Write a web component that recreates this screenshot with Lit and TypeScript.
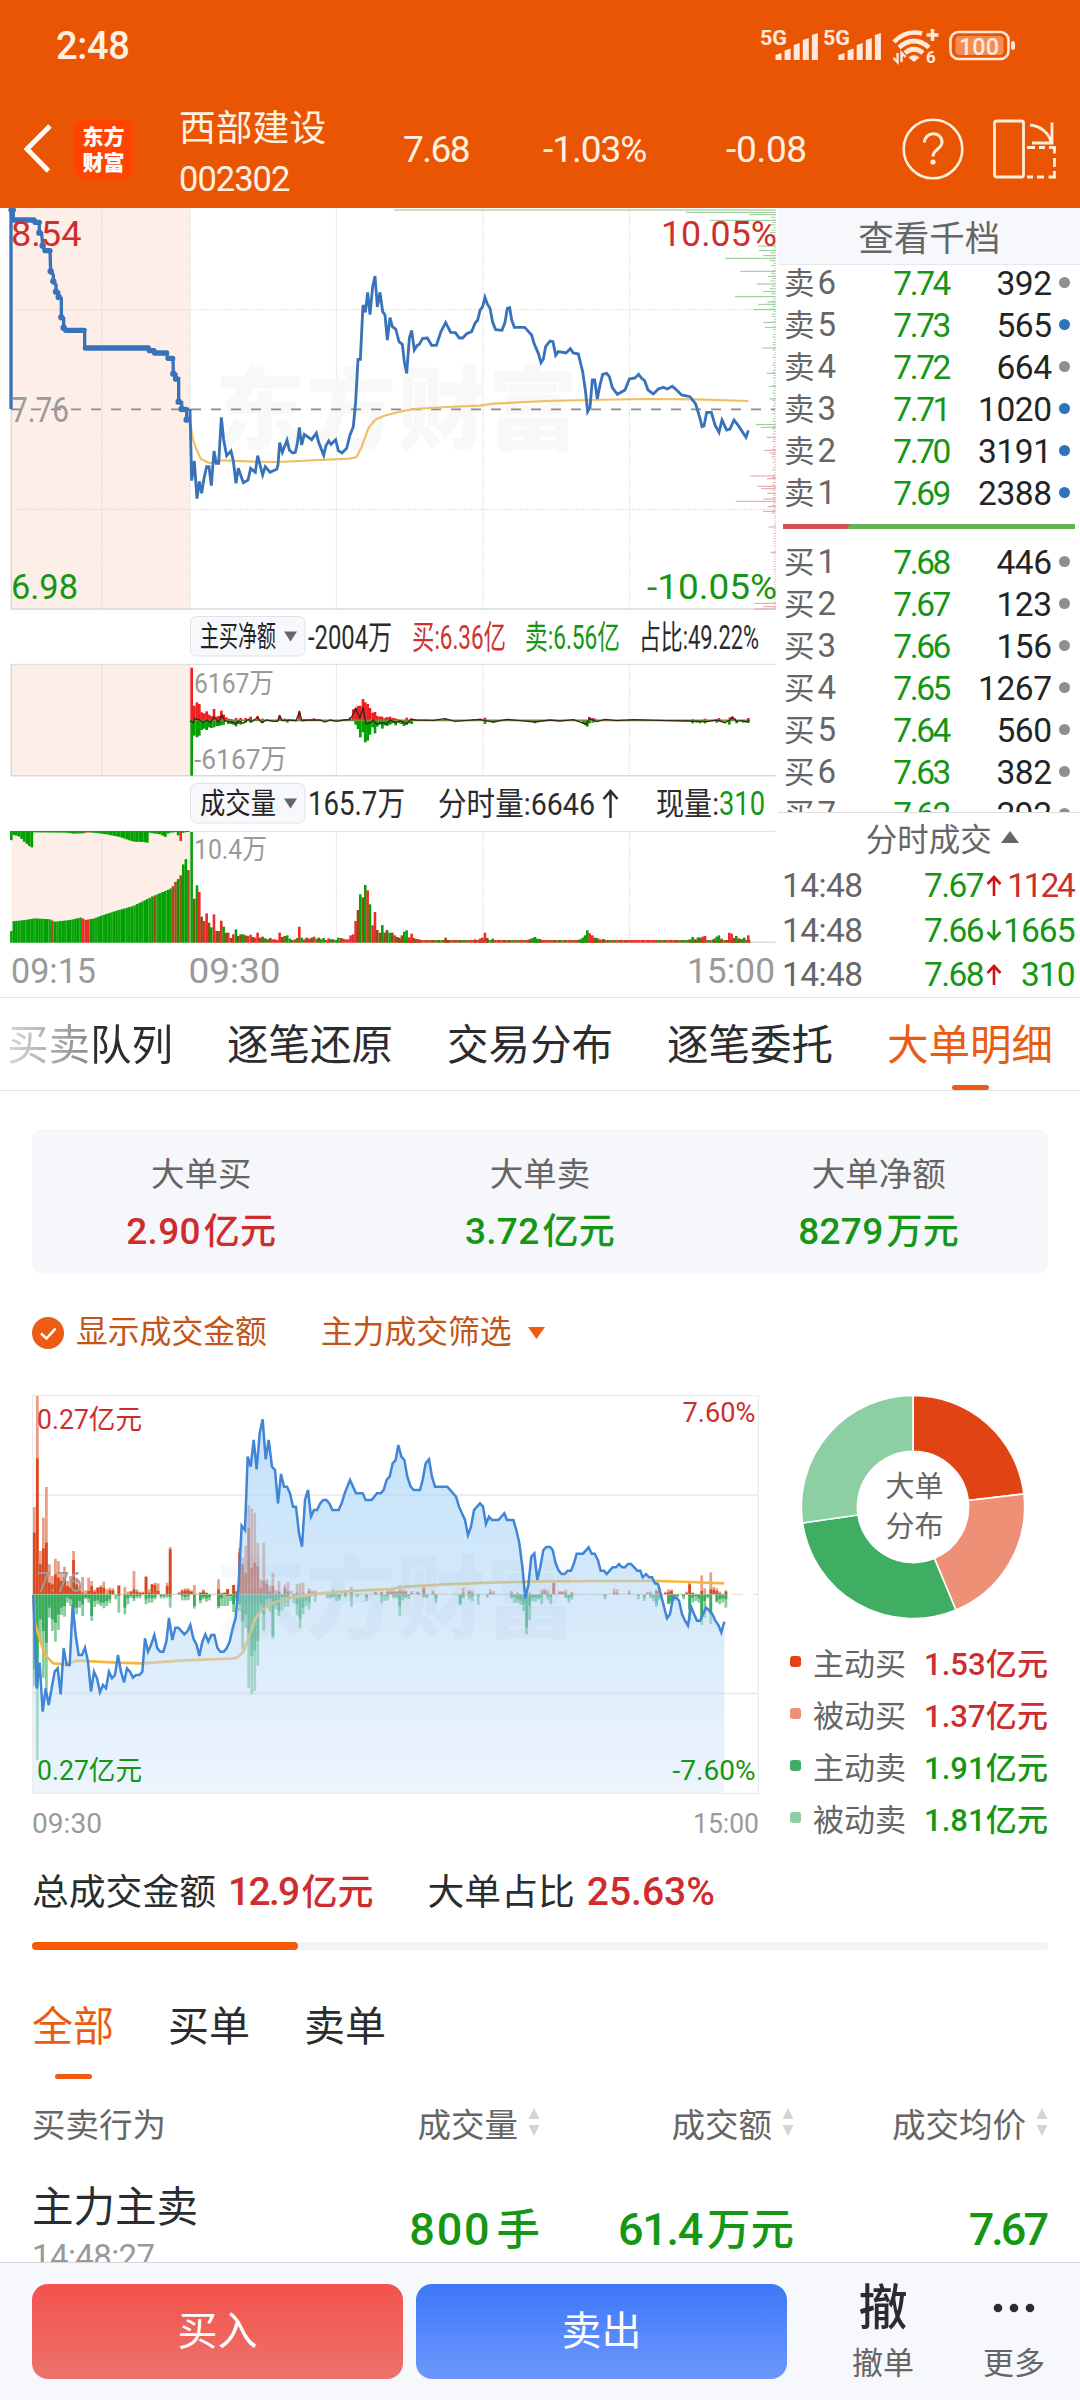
import { LitElement, html, svg, css } from "lit";
import { customElement } from "lit/decorators.js";

type P = [number, number];
const pairs = (s: string): P[] =>
  s.trim().split(/\s+/).map((p) => p.split(",").map(Number) as P);
const shift = (s: string, dx: number) =>
  pairs(s).map(([x, y]) => `${x + dx},${y}`).join(" ");

const RED = "#cd3232";
const GREEN = "#159615";
const INK = "#2b2c2e";
const MUTE = "#9a9a9a";

/** Text stretched to an exact advance width. */
const label = (x: number, y: number, w: number, size: number, fill: string, text: string) =>
  svg`<text x=${x} y=${y} font-size=${size} fill=${fill} textLength=${w} lengthAdjust="spacingAndGlyphs">${text}</text>`;

/* Chart data is stored in thirds of a pixel. */
const AUCTION = "33,612 33,15 40,15 40,45 100,45 105,52 118,52 118,83 125,85 128,122 135,137 150,137 152,199 160,210 160,229 168,240 168,260 176,262 176,276 184,280 184,337 191,340 191,368 197,375 254,375 254,429 445,429 450,437 460,437 465,444 500,444 503,460 519,460 520,506 528,508 528,521 536,521 536,590 545,592 545,612 560,614 560,644";
const AUCTION_DOTS: P[] = pairs("118,83 128,122 152,199 160,229 168,260 176,276 184,337 191,368 520,506 528,521 536,590 545,612 560,644");
const PRICE = "570,612 575,827 583,768 591,881 598,829 605,865 612,820 620,785 627,785 634,842 642,738 649,775 656,775 664,637 671,705 680,752 693,738 700,768 708,835 715,790 730,833 744,825 752,790 766,802 773,752 788,810 796,785 810,802 830,793 834,780 839,713 847,742 861,706 868,735 878,744 886,742 892,715 898,667 905,720 913,688 935,704 949,684 956,712 971,751 978,722 986,708 993,718 1007,704 1015,737 1026,744 1040,730 1050,690 1060,665 1067,590 1074,463 1081,463 1089,300 1096,322 1103,262 1110,329 1118,245 1125,213 1132,306 1140,262 1148,320 1155,330 1162,405 1170,338 1177,365 1187,372 " +
  shift("57,410 67,418 73,470 80,505 88,400 95,376 103,435 111,422 118,418 128,400 142,399 155,421 169,421 183,380 197,353 212,382 226,383 238,399 248,399 260,386 275,380 285,355 293,345 300,316 308,305 315,277 322,297 330,310 338,352 347,374 366,376 375,352 382,310 389,308 395,345 403,367 434,367 455,390 462,415 475,445 483,473 490,462 497,425 510,408 519,410 527,451 535,440 558,444 571,431 580,444 595,447 608,500 616,555 623,620 630,607 637,525 644,525 652,582 660,540 668,508 680,505 688,515 697,548 712,568 735,555 748,522 765,519 776,508 785,520 794,527 804,555 820,567 835,552 850,547 862,552 877,544 893,558 905,570 930,575 947,597 960,640 966,665 972,663 980,622 994,622 1005,660 1017,682 1026,645 1040,675 1050,672 1062,645 1075,662 1098,697 1105,676", 1140);
const AVERAGE = "572,660 578,700 590,735 603,762 625,773 640,775 665,766 760,770 830,771 1000,763 1050,761 1070,756 1085,725 1105,670 1125,645 1150,633 1200,620 1240,612 1340,606 1440,602 1480,596 1640,588 1760,585 1940,582 2090,583 2245,588";

const DEPTH_SELL = pairs("22,918 29,1107 46,990 123,1135 137,1137 152,1150 160,1035 199,1081 214,1163 237,1130 260,1148 275,1065 291,1162 298,1135 314,1120 352,1150 367,1155 429,1147 505,1160 544,1168 582,1168 659,1127 667,1143");
const DEPTH_BUY = pairs("697,1160 736,1152 744,1168 813,1110 821,1160 844,1133 851,1143 865,1162 882,1150 889,1067 905,1163 919,1149 966,1165 1042,1172 1195,1122 1205,1150 1212,1125");

/* x,height pairs around the zero line */
const NET_UP = "575,159 583,45 591,55 598,50 605,25 613,22 620,28 627,18 634,14 642,35 650,12 656,14 664,30 671,18 678,10 685,6 693,5 708,8 722,8 737,8 752,12 773,14 788,6 839,16 854,6 898,28 913,5 942,7 1050,10 1060,34 1067,38 1074,44 1081,45 1089,65 1096,55 1103,50 1110,38 1118,24 1125,26 1132,14 1140,12 1147,10 1155,7 1162,10 1170,8 1177,6 1185,7 1192,5 1145,12 1160,10 1170,12 1180,8 1220,9 1235,7 1335,8 1420,5 1440,6 1455,9 1768,11 1778,8 1785,6 2078,4 2115,6 2157,8 2190,10 2197,13 2204,7 2245,8";
const NET_DOWN = "575,165 583,45 591,50 598,45 605,28 613,24 620,28 627,20 634,22 642,20 650,16 656,16 664,14 671,12 685,10 693,10 700,12 708,17 715,10 722,12 737,6 752,6 788,7 862,6 1067,12 1074,25 1081,50 1089,35 1096,65 1103,60 1110,42 1118,20 1125,38 1132,18 1140,12 1147,14 1155,10 1162,16 1170,12 1177,8 1187,14 1197,8 1147,24 1155,14 1162,8 1170,10 1180,7 1205,10 1212,16 1220,12 1228,8 1235,10 1455,10 1480,6 1605,8 1750,10 1757,14 1762,18 1770,8 1780,6 2078,8 2090,6 2100,8 2115,8 2150,6 2188,12 2210,8 2230,6 2245,7";
const NET_LINE = "570,332 580,338 583,326 600,330 610,338 620,330 632,338 642,320 655,337 666,316 674,333 700,337 708,342 715,333 730,340 745,328 755,335 773,322 785,338 800,330 820,334 832,334 839,318 847,332 870,330 888,332 898,306 906,332 925,330 960,330 975,336 990,330 1010,334 1030,330 1050,328 1060,312 1067,296 1080,324 1089,292 1098,342 1112,338 1120,330 1130,343 1145,338 1160,342 1170,330 1187,338 1200,332 1220,342 1232,328 1250,330 1300,331 1335,326 1365,334 1440,328 1455,332 1480,336 1520,328 1560,332 1605,336 1650,330 1680,333 1720,329 1760,343 1768,326 1790,335 1815,328 1850,332 1900,329 2000,332 2060,333 2120,335 2150,330 2175,338 2190,330 2197,322 2210,334 2225,332 2240,336 2248,330";

const VOL: string[] = [
  "g575,332 m583,132 g591,172 r598,152 m605,78 r613,65 r620,88 m627,60 g634,46 r642,85 m650,35 m656,35 r664,66 g671,48 m678,30 r685,30 m693,14 r700,25 g708,40 m715,20 m722,25 g730,25 m737,22 r744,20 r752,24 m759,17 r766,15 r773,30 m781,15 m788,18 g796,13 m803,10 m811,14 r818,10 r825,10 r832,8 r839,30 m847,17 m854,20 g862,22 g870,12 m877,8 r885,10 g892,14 r898,48 g905,15 r913,10 m920,15 r928,12 m935,15 r942,18 g950,12 m957,15 g964,10 g971,14 r979,8 r986,13 g993,10 m1000,10 g1008,8 g1015,15 m1023,14 r1030,12 r1037,10 r1045,10 r1052,22 r1060,25 r1067,65 m1074,98 g1081,145 m1089,136 g1096,173 r1103,157 g1110,115 r1118,52 r1125,92 m1132,38 m1140,30",
  "g1147,53 m1154,30 m1161,38 g1169,30 m1177,30 r1184,22 m1191,17 m1198,15 m1206,22 g1213,33 g1220,37 r1228,16 r1235,27 m1242,14 r1250,11 r1257,10 m1337,15 m1344,8 r1425,10 r1440,12 r1447,15 r1455,30 m1462,14 g1478,12 m1590,11 g1598,14 g1605,17 g1612,12 m1620,11 g1740,10 g1748,15 g1755,22 g1762,37 r1769,28 r1777,22 m1784,15 g1792,14 r1800,10 m1810,11 g2070,10 g2078,17 m2086,10 g2094,16 m2101,15 r2108,18 r2115,20 m2142,12 g2150,18 g2157,22 m2165,12 r2188,30 r2195,27 m2202,14 g2209,20 m2217,13 g2225,11 g2233,15 r2245,22",
];
const VOL_COLOR: Record<string, string> = { g: "#0aa00a", r: "#ee2a2a", m: "#8a5010" };

const AUCTION_TOP = pairs("33,973 37,934 75,930 105,925 150,928 165,935 210,930 245,922 255,930 280,926 310,915 350,902 400,888 440,868 460,858 510,837 520,828 530,810 538,805 545,790 552,752 562,744 570,832");
const AUCTION_HANG = pairs("33,30 40,12 50,14 60,18 70,30 80,38 88,45 97,50 99,4 200,5 220,8 250,7 262,4 290,6 320,10 340,14 360,18 380,25 400,32 430,33 443,35 448,5 480,10 497,18 505,6 530,3 543,32 550,5 560,3");
const lerp = (pts: P[], x: number) => {
  for (let i = 1; i < pts.length; i++)
    if (x <= pts[i][0]) {
      const [a, b] = [pts[i - 1], pts[i]];
      return a[1] + ((b[1] - a[1]) * (x - a[0])) / (b[0] - a[0] || 1);
    }
  return pts[pts.length - 1][1];
};

const FLOW_LINE = "100,645 110,925 119,848 128,995 137,925 146,975 155,925 164,875 173,865 182,943 191,805 200,855 209,855 218,675 227,765 236,825 246,825 255,803 264,845 273,935 282,875 291,895 300,937 309,915 318,925 327,875 336,895 345,885 354,825 363,875 372,907 381,865 390,875 399,893 408,885 418,885 427,875 435,775 444,815 453,795 463,765 472,805 481,815 490,815 499,785 507,714 517,780 526,743 535,743 553,763 563,753 571,735 580,775 590,795 598,828 607,785 616,763 625,785 634,765 643,765 652,803 661,815 671,815 680,805 689,785 698,745 707,713 716,610 725,437 735,450 743,230 752,260 761,180 770,268 779,160 788,118 797,238 806,180 816,260 825,270 834,370 843,282 852,320 861,320 870,340 879,380 888,380 897,460 906,500 915,360 924,330 933,410 942,390 951,390 961,370 970,360 979,360 988,370 997,390 1016,390 1025,370 1034,340 1050,300 1068,340 1088,340 1097,360 1115,360 1131,340 1142,340 1151,330 1160,300 1169,290 1178,250 1187,240 " +
  shift("25,195 34,230 43,240 52,290 62,320 71,330 90,330 98,300 107,250 117,238 126,290 135,320 172,320 198,350 207,380 225,420 234,465 243,440 252,390 270,370 279,380 288,432 297,410 306,420 325,420 343,400 351,420 370,420 379,450 388,490 397,560 406,655 415,615 424,530 433,520 442,600 451,560 460,510 469,501 480,501 488,510 497,550 506,572 515,582 524,582 533,572 543,572 552,550 560,521 579,521 596,502 605,521 614,521 624,541 632,572 642,572 650,582 668,562 678,562 687,552 696,562 705,562 714,552 723,552 742,572 751,572 758,592 768,582 777,592 786,592 795,610 804,612 813,645 822,680 831,715 840,702 849,653 858,653 867,662 876,702 885,722 894,737 903,680 912,702 921,722 930,722 939,702 948,683 958,692 967,702 976,722 985,735 994,757 1003,725", 1170);
const FLOW_AVG = "100,645 105,730 117,770 135,825 160,850 200,853 230,842 350,848 427,850 550,841 690,836 712,833 730,815 745,775 765,718 780,695 810,672 860,655 960,640 1068,632 1170,627 1220,620 1340,613 1470,608 1600,605 1790,603 1970,603 2070,606 2173,610";

/* minute,total,active */
const triples = (s: string) => s.trim().split(/\s+/).map((t) => t.split(",").map(Number));
const BUY_FLOW = triples("0,262,185 1,595,408 2,130,90 3,230,138 4,322,155 5,90,35 6,55,30 7,107,60 8,100,50 9,60,40 10,83,50 11,40,25 12,55,20 13,130,103 14,50,30 15,25,10 16,52,5 17,12,0 18,50,10 19,40,25 20,14,8 21,20,20 22,27,22 23,38,20 24,15,0 25,20,12 26,18,12 28,27,26 30,22,0 31,8,0 32,10,8 33,70,15 34,15,8 35,8,5 36,8,5 37,53,53 38,15,5 39,30,30 40,35,28 41,33,10 44,35,25 45,142,135 48,7,3 49,15,10 50,18,12 51,18,12 52,12,8 53,28,0 55,7,4 56,15,10 57,6,4 61,45,15 62,5,2 63,6,4 64,16,16 66,28,28 67,10,8 68,138,125 69,110,90 70,145,65 71,268,200 72,258,80 73,245,95 74,155,85 75,45,20 76,155,40 77,45,30 78,25,8 79,65,25 80,12,0 81,40,8 83,30,20 84,37,8 85,10,0 87,32,5 88,33,0 89,35,5 91,18,10 92,12,5 93,12,8 99,15,5 103,8,4 105,22,15 113,8,6 115,8,6 117,12,8 118,15,6 119,20,8 120,10,6 121,28,10 122,14,8 123,12,8 125,10,4 127,8,5 129,22,18 132,12,4 142,20,4 144,12,8 145,10,4 151,15,6 152,10,3 158,10,4 160,6,3 164,6,3 168,14,4 169,17,10 170,12,4 172,35,35 174,8,8 175,8,8 176,14,5 178,8,4 192,17,5 193,16,5 197,12,4 203,8,3 204,8,3 206,15,10 207,20,8 209,8,4 210,15,6 211,15,10 216,8,4 217,37,30 218,6,4 221,57,10 222,18,0 224,66,15 225,22,14 226,18,10 227,8,4 229,12,8");
const SELL_FLOW = triples("0,275,225 1,497,282 2,145,75 3,250,110 4,285,145 5,70,40 6,110,75 7,142,85 8,107,60 9,62,40 10,67,35 11,25,10 12,35,15 13,75,40 14,60,40 15,40,20 16,65,30 17,15,10 18,25,12 19,80,65 20,38,20 21,30,18 22,35,25 23,42,25 24,35,20 25,27,15 27,15,0 28,55,5 30,60,40 31,30,12 32,10,5 33,20,12 34,12,5 35,12,5 37,30,15 38,25,10 39,25,12 40,15,8 42,12,6 43,12,4 44,10,4 45,40,8 49,18,5 50,18,8 51,18,5 53,43,35 55,27,18 56,15,8 57,22,12 58,18,8 61,42,36 62,35,12 63,35,0 64,35,5 65,20,5 66,53,30 67,20,10 68,50,30 69,165,80 70,100,60 71,280,125 72,300,185 73,290,170 74,215,140 75,50,30 76,110,60 77,40,15 78,52,12 79,133,125 80,45,30 81,65,50 82,48,8 83,38,15 84,38,8 86,27,12 87,63,30 88,100,75 89,60,40 90,35,20 91,45,25 93,22,5 97,12,4 98,12,8 99,10,5 100,20,4 101,18,10 103,8,4 105,37,6 107,8,4 110,20,10 115,26,4 116,20,3 117,18,6 119,12,6 120,12,6 121,65,35 122,18,5 123,12,8 124,14,5 129,10,6 130,12,5 133,25,12 141,33,28 142,12,8 144,15,6 145,20,6 147,32,6 150,10,5 159,25,8 158,12,8 160,25,15 161,32,18 162,50,30 163,120,100 164,78,35 165,20,10 166,22,8 167,15,10 168,30,8 170,15,5 171,30,8 176,12,8 177,25,12 178,16,8 189,15,6 200,15,5 202,20,10 204,12,5 205,20,10 206,38,30 207,18,10 210,28,28 211,28,22 212,20,8 213,10,5 215,15,6 217,80,45 218,25,10 219,20,5 220,25,12 221,92,75 222,70,20 223,12,6 224,90,60 226,25,20 227,30,15 228,25,12 229,40,15");

const SELLS = [["6", "7.74", "392", 0], ["5", "7.73", "565", 1], ["4", "7.72", "664", 0], ["3", "7.71", "1020", 1], ["2", "7.70", "3191", 1], ["1", "7.69", "2388", 1]];
const BUYS = [["1", "7.68", "446", 0], ["2", "7.67", "123", 0], ["3", "7.66", "156", 0], ["4", "7.65", "1267", 0], ["5", "7.64", "560", 0], ["6", "7.63", "382", 0], ["7", "7.62", "292", 0]];

const FONT = css`
  :host {
    display: block;
    font-family: Roboto, "Noto Sans CJK SC", sans-serif;
    box-sizing: border-box;
  }
  svg { display: block; font-family: Roboto, "Noto Sans CJK SC", sans-serif; }
  .r { color: #cd2d2d; }
  .g { color: #159615; }
`;

@customElement("stock-header")
class StockHeader extends LitElement {
  static styles = [FONT, css`
    :host { height: 208px; background: #ea5504; color: #fff1e2; }
    .status { display: flex; justify-content: space-between; align-items: center; height: 92px; padding: 0 63px 0 56px; }
    .time { font-size: 38px; font-weight: 500; letter-spacing: -0.3px; }
    .bar { display: flex; align-items: center; height: 114px; padding: 0 22px 0 23px; }
    .logo { width: 59px; height: 59px; margin-left: 21px; border-radius: 12px; background: #ff4300; color: #fff; font-weight: 900; font-size: 21px; line-height: 26px; text-align: center; padding-top: 4px; box-sizing: border-box; }
    .name { width: 224px; margin-left: 46px; font-size: 36.8px; line-height: 51px; padding-top: 9px; }
    .code { font-size: 34.5px; letter-spacing: -1px; }
    .num { font-size: 37px; letter-spacing: -1.5px; width: 140px; }
    .pct { width: 183px; letter-spacing: -1px; }
    .diff { width: 176px; letter-spacing: -0.3px; }
    .help { margin-right: 28px; }
  `];
  render() {
    const bars = (x: number) => [0, 1, 2, 3, 4].map((i) => {
      const t = [53, 48.5, 43, 38, 33][i];
      return svg`<path d="M${x + i * 9.1} ${t + 2} l6 -2 V60 h-6 Z" fill="#ffe9dc"/>`;
    });
    return html`
      <div class="status">
        <span class="time">2:48</span>
        <svg width="258" height="44" viewBox="760 24 258 44">
          <text x="761" y="44.5" font-size="20" font-weight="700" fill="#ffe9dc" textLength="27" lengthAdjust="spacingAndGlyphs">5G</text>
          ${bars(776.5)}
          <text x="824" y="44.5" font-size="20" font-weight="700" fill="#ffe9dc" textLength="27" lengthAdjust="spacingAndGlyphs">5G</text>
          ${bars(839.5)}
          <g fill="none" stroke="#ffe9dc" stroke-width="4.6">
            <path d="M895 42 Q907 29.5 923 33.500"/>
            <path d="M900 47.5 Q915 34.5 930 47.5"/>
            <path d="M906 53 Q915 45.500 924 53"/>
          </g>
          <path d="M909.500 57.500 Q915 53 920.500 57.500 L915 62 Z" fill="#ffe9dc"/>
          <path d="M933.500 29 v12 M927.500 35 h12" stroke="#ffe9dc" stroke-width="3.600"/>
          <path d="M898.500 53 v9 l-4 -4 M902.500 62 v-9 l4 4" fill="none" stroke="#ffe9dc" stroke-width="2.400"/>
          <text x="927" y="62.500" font-size="17" font-weight="700" fill="#ffe9dc">6</text>
          <rect x="951.500" y="32" width="58" height="27" rx="8" fill="none" stroke="#ffe9dc" stroke-width="2.600"/>
          <rect x="956.500" y="36" width="48" height="19" rx="4" fill="#f48c53"/>
          <text x="960" y="54.500" font-size="24" font-weight="500" fill="#ffe9dc" textLength="40" lengthAdjust="spacingAndGlyphs">100</text>
          <rect x="1012" y="41" width="4" height="9" rx="2" fill="#ffe9dc"/>
        </svg>
      </div>
      <div class="bar">
        <svg width="30" height="52" viewBox="0 0 30 52"><path d="M27 3 L4 26 L25.500 48" fill="none" stroke="#fffaf5" stroke-width="5"/></svg>
        <div class="logo">东方<br />财富</div>
        <div class="name">西部建设<div class="code">002302</div></div>
        <div class="num">7.68</div>
        <div class="num pct">-1.03%</div>
        <div class="num diff">-0.08</div>
        <svg class="help" width="62" height="62" viewBox="0 0 62 62">
          <circle cx="31" cy="31" r="29.300" fill="none" stroke="#ffeeda" stroke-width="2.600"/>
          <path d="M22.500 24.500 C22.500 13 40 13 40 24 C40 31.500 31 31 31 38.500" fill="none" stroke="#ffeeda" stroke-width="3"/>
          <circle cx="31" cy="44" r="2.600" fill="#ffeeda"/>
        </svg>
        <svg width="66" height="62" viewBox="0 0 66 62" fill="none" stroke="#ffeeda" stroke-width="2.800">
          <rect x="2.500" y="3" width="29" height="56" rx="2"/>
          <path d="M38 7 C49 8 58 16 59 25 M60 4.500 V25 H40"/>
          <path d="M35 29.500 h8 M47 29.500 h6 M57 29.500 h5.500 v6 M62.500 40 v9 M62.500 53 v6 h-6 M52 59 h-7 M41 59 h-6"/>
        </svg>
      </div>`;
  }
}

@customElement("quote-chart")
class QuoteChart extends LitElement {
  static styles = [FONT, css`:host { width: 778px; flex: none; }`];
  render() {
    const grid = [306, 570, 1009, 1449, 1888];
    const depthFill = [];
    for (let y = 20, k = 0; y < 1212; y += 7.65, k++) {
      const sell = y < 680;
      const density = sell ? (y < 330 ? 16 : 8) : y < 930 ? 10 : 4;
      const len = 3 + ((k * 37) % 11) / 11 * density;
      depthFill.push(svg`<rect x=${2327 - len} y=${y} width=${len} height="3" fill=${sell ? "#93cf93" : "#eda6a6"}/>`);
    }
    const depth = (d: P[], c: string) => d.map(([y, x]) => svg`<rect x=${x + 1140} y=${y - 1.5} width=${1187 - x} height="3" fill=${c}/>`);
    const auctionBars = [];
    for (let x = 34, k = 0; x < 570; x += 7.7, k++) {
      const y = lerp(AUCTION_TOP, x);
      const red = Math.abs(x - 158) < 4 || (x > 248 && x < 272) || Math.abs(x - 463) < 4 || (x > 512 && x < 532) || Math.abs(x - 543) < 4 || x > 564;
      auctionBars.push(svg`<rect x=${x - 4} y=${y} width=${red ? 7.7 : 7.9} height=${998 - y} fill=${red ? (x > 240 && x < 280 ? "#ee2a2a" : "#a84a1c") : k % 3 ? "#00a000" : "#0ea60e"}/>`);
      const h = lerp(AUCTION_HANG, x);
      const hr = Math.abs(x - 543) < 5 || (x > 250 && x < 272);
      auctionBars.push(svg`<rect x=${x - 4} y="663" width="7.9" height=${h} fill=${hr ? "#e83030" : "#00a000"}/>`);
    }
    const baseline = [];
    for (let x = 1197, k = 0; x < 2248; x += 7.32, k++)
      baseline.push(svg`<rect x=${x} y="990" width="7.4" height="8" fill=${x > 1880 && x < 1960 ? "#ee2a2a" : ["#ee2a2a", "#8a5010", "#d03a1c", "#1f9a10", "#a84a1c"][(k * 7 + (k >> 2)) % 5]}/>`);
    return html`<svg width="778" height="789" viewBox="0 208 778 789">
      <g transform="translate(0 205) scale(.333333)">
        <rect x="34" y="9" width="536" height="1203" fill="#fdeee8"/>
        ${grid.map((x) => svg`<path d="M${x} 12 V1212" stroke="#d2cecc" stroke-width="3" stroke-dasharray="3 4"/>`)}
        ${[314, 913].map((y) => svg`<path d="M34 ${y} H2327" stroke="#d2cecc" stroke-width="3" stroke-dasharray="3 4"/>`)}
        <path d="M34 12 V1212 H2327" fill="none" stroke="#d9d9da" stroke-width="4.500"/>
      </g>
      <text x="215" y="442" font-size="90" font-weight="900" fill="#f7f7f7" fill-opacity=".85" textLength="363" lengthAdjust="spacing">东方财富</text>
      <g transform="translate(0 205) scale(.333333)">
        <path d="M33 613 H2325" stroke="#8b8b8b" stroke-width="5" stroke-dasharray="30 30"/>
        <rect x="1183" y="12" width="1144" height="6" fill="#cddcc0"/>
        ${depthFill}${depth(DEPTH_SELL, "#93c893")}${depth(DEPTH_BUY, "#dfa0a0")}
        <polyline points=${AVERAGE} fill="none" stroke="#efc063" stroke-width="6.500" stroke-linejoin="round"/>
        <polyline points=${AUCTION} fill="none" stroke="#3873ba" stroke-width="10"/>
        <path d="M33 15 H40 M40 45 H102 M105 52 H118 M135 137 H150 M197 376 H252 M256 429 H445 M448 437 H462 M464 444 H500 M504 460 H518 M545 613 H558" stroke="#3873ba" stroke-width="16" stroke-linecap="round"/>
        ${AUCTION_DOTS.map(([x, y]) => svg`<circle cx=${x} cy=${y} r="9.500" fill="#3873ba"/>`)}
        <path d="M564 612 L568 612" stroke="#3873ba" stroke-width="8"/>
        <polyline points=${PRICE} fill="none" stroke="#3873ba" stroke-width="8.500"/>
      </g>
      ${label(11, 246, 70.5, 34.5, "#cf2f2c", "8.54")}
      ${label(661, 246, 116, 34.5, "#cf2f2c", "10.05%")}
      ${label(11, 422, 58, 34.5, MUTE, "7.76")}
      ${label(11, 599, 67, 34.5, GREEN, "6.98")}
      ${label(647, 599, 130, 34.5, GREEN, "-10.05%")}

      <rect x="190.500" y="616.500" width="114.500" height="39.500" rx="6" fill="#f6f8fb" stroke="#dfe3e9"/>
      ${label(200, 647, 76, 29, "#222", "主买净额")}
      <path d="M284 631.500 h13 l-6.500 10 Z" fill="#666"/>
      ${label(308, 649, 84, 33, INK, "-2004万")}
      ${label(412, 649, 94, 33, RED, "买:6.36亿")}
      ${label(525, 649, 95, 33, GREEN, "卖:6.56亿")}
      ${label(639, 649, 120, 33, INK, "占比:49.22%")}

      <g transform="translate(0 610) scale(.333333)">
        <rect x="34" y="163" width="536" height="334" fill="#fdeee8"/>
        ${grid.map((x) => svg`<path d="M${x} 165 V497" stroke="#cfcbc9" stroke-width="3" stroke-dasharray="3 4"/>`)}
        <path d="M34 163 H2327" stroke="#dcdcdc" stroke-width="3"/>
        <path d="M34 163 V497 H2327" fill="none" stroke="#d9d9da" stroke-width="4.500"/>
        ${pairs(NET_UP).map(([x, h]) => svg`<rect x=${x - 4} y=${332 - h} width="8" height=${h} fill="#ee2020"/>`)}
        ${pairs(NET_DOWN).map(([x, h]) => svg`<rect x=${x - 4} y="332" width="8" height=${h} fill="#00a000"/>`)}
        <path d="M570 331 H2248" stroke="#7a8a3a" stroke-width="5"/>
        <polyline points=${NET_LINE} fill="none" stroke="#38261c" stroke-width="4"/>
      </g>
      ${label(194, 692.5, 80, 28.5, MUTE, "6167万")}
      ${label(194, 768.5, 93, 28.5, MUTE, "-6167万")}

      <rect x="190.500" y="783.500" width="114.500" height="39.500" rx="6" fill="#f6f8fb" stroke="#dfe3e9"/>
      ${label(200, 814, 76, 29, "#222", "成交量")}
      <path d="M284 798.500 h13 l-6.500 10 Z" fill="#666"/>
      ${label(308, 815, 97, 33, INK, "165.7万")}
      ${label(438, 815, 157, 32, INK, "分时量:6646")}
      <path d="M610.500 818 V791 M603.500 799 L610.500 791 L617.500 799" fill="none" stroke=${INK} stroke-width="2.500"/>
      ${label(656, 815, 63, 32, INK, "现量:")}
      ${label(719, 815, 46, 33, GREEN, "310")}

      <g transform="translate(0 610) scale(.333333)">
        <rect x="34" y="664" width="536" height="334" fill="#fdeee8"/>
        ${grid.map((x) => svg`<path d="M${x} 666 V998" stroke="#cfcbc9" stroke-width="3" stroke-dasharray="3 4"/>`)}
        <path d="M34 664 H2327" stroke="#dcdcdc" stroke-width="3"/>
        <path d="M34 997 H2327" stroke="#dcdcdc" stroke-width="4.500"/>
        ${auctionBars}${baseline}
        ${VOL.flatMap((s) => s.split(" ")).map((b) => {
          const [x, h] = b.slice(1).split(",").map(Number);
          return svg`<rect x=${x - 4} y=${998 - h} width="7.8" height=${h} fill=${VOL_COLOR[b[0]]}/>`;
        })}
      </g>
      ${label(194, 859, 73, 28.5, MUTE, "10.4万")}
      ${label(11, 983, 85, 35, MUTE, "09:15")}
      ${label(188.5, 983, 92, 35, MUTE, "09:30")}
      ${label(687, 983, 88, 35, MUTE, "15:00")}
    </svg>`;
  }
}

@customElement("order-book")
class OrderBook extends LitElement {
  static styles = [FONT, css`
    :host { flex: 1; display: flex; flex-direction: column; height: 789px; }
    .head { height: 57px; line-height: 62px; background: #f6f8fb; border-bottom: 1px solid #e6e8ec; text-align: center; font-size: 35.5px; color: #666; box-sizing: border-box; }
    .book { height: 548px; overflow: hidden; box-sizing: border-box; padding: 0 11px 0 6px; border-bottom: 1px solid #dedfe1; }
    .row { display: grid; grid-template-columns: 70px 97px 1fr 18px; align-items: center; height: 42px; line-height: 42px; }
    .sells { margin-top: -3px; }
    .side { font-size: 30.5px; color: #666; }
    .side b { font-weight: 400; font-size: 33px; margin-left: 3px; }
    .p { font-size: 33.5px; text-align: right; letter-spacing: -2.4px; padding-right: 2px; color: #159615; }
    .v { font-size: 33.5px; text-align: right; letter-spacing: -0.4px; color: #232426; }
    .dot { justify-self: end; width: 11px; height: 11px; border-radius: 50%; background: #8e8e93; margin-bottom: 3px; }
    .dot.big { background: #2f72bd; }
    .ratio { display: block; margin: 10px -6px 12px -1px; }
    .deal-head { height: 48px; display: flex; align-items: center; justify-content: center; gap: 9px; font-size: 31.5px; color: #666; padding-left: 26px; }
    .deals { padding: 3px 6px 0 4px; }
    .deal { display: grid; grid-template-columns: 110px 91px 20px 1fr; align-items: center; height: 44.5px; font-size: 33.5px; letter-spacing: -1.6px; }
    .deal span { text-align: right; }
    .deal .t { color: #666; text-align: left; letter-spacing: -0.6px; }
    .deal .q { letter-spacing: -0.9px; }
    .deal .q.r { letter-spacing: -2.2px; padding-right: 1px; }
  `];
  row(side: string, r: any[]) {
    return html`<div class="row"><span class="side">${side}<b>${r[0]}</b></span><span class="p">${r[1]}</span><span class="v">${r[2]}</span><i class="dot ${r[3] ? "big" : ""}"></i></div>`;
  }
  arrow(up: boolean) {
    return html`<svg width="20" height="24" viewBox="0 0 20 24" fill="none" stroke=${up ? "#cc1414" : "#159615"} stroke-width="2.6">
      ${up ? svg`<path d="M11 22 V3 M4.500 10 L11 3 L17.500 10"/>` : svg`<path d="M11 2 V21 M4.500 14 L11 21 L17.500 14"/>`}</svg>`;
  }
  render() {
    return html`
      <div class="head">查看千档</div>
      <div class="book">
        <div class="sells">${SELLS.map((r) => this.row("卖", r))}</div>
        <svg class="ratio" width="292" height="5" viewBox="0 0 292 5"><rect width="292" height="5" fill="#63b352"/><path d="M0 0 H67.500 L63.500 5 H0 Z" fill="#d45050"/></svg>
        ${BUYS.map((r) => this.row("买", r))}
      </div>
      <div class="deal-head">分时成交<svg width="18" height="12" viewBox="0 0 18 12"><path d="M9 0 L18 12 H0 Z" fill="#666"/></svg></div>
      <div class="deals">
        <div class="deal"><span class="t">14:48</span><span class="g">7.67</span>${this.arrow(true)}<span class="q r">1124</span></div>
        <div class="deal"><span class="t">14:48</span><span class="g">7.66</span>${this.arrow(false)}<span class="q g">1665</span></div>
        <div class="deal"><span class="t">14:48</span><span class="g">7.68</span>${this.arrow(true)}<span class="q g">310</span></div>
      </div>`;
  }
}

@customElement("flow-chart")
class FlowChart extends LitElement {
  static styles = [FONT, css`:host { width: 730px; }`];
  render() {
    const bars = (d: number[][], dir: number, light: string, dark: string) =>
      d.map(([m, total, active]) => {
        const x = 103 + m * 9.06 - 4.2;
        const y = (h: number) => (dir < 0 ? 643 - h : 643);
        return svg`<rect x=${x} y=${y(total)} width="8.2" height=${total} fill=${light}/><rect x=${x} y=${y(active)} width="8.2" height=${active} fill=${dark}/>`;
      });
    return html`<svg width="730" height="446" viewBox="32 1394 730 446">
      <defs><linearGradient id="area" x1="0" y1="0" x2="0" y2="1">
        <stop offset="0" stop-color="#9ed1f9" stop-opacity=".62"/>
        <stop offset=".5" stop-color="#add4f5" stop-opacity=".5"/>
        <stop offset="1" stop-color="#dceafb" stop-opacity=".5"/>
      </linearGradient></defs>
      <g transform="translate(0 1380) scale(.333333)">
        <rect x="98" y="47" width="2177" height="1193" fill="none" stroke="#e9e9eb" stroke-width="3"/>
        <path d="M98 345 H2275 M98 940 H2275" stroke="#e9e9eb" stroke-width="5"/>
        <path d="M98 643 H2275" stroke="#dedede" stroke-width="3" stroke-dasharray="30 30"/>
      </g>
      <g transform="translate(0 1380) scale(.333333)">
        ${bars(BUY_FLOW, -1, "#eb9c84", "#d9481f")}
        ${bars(SELL_FLOW, 1, "#86cc9d", "#38ab5d")}
        <path d="M100 643 H2175" stroke="#cdbb9a" stroke-width="2"/>
        <polyline points=${FLOW_AVG} fill="none" stroke="#f6b73f" stroke-width="8" stroke-linejoin="round"/>
        <path d="M${FLOW_LINE} L2173,1240 L100,1240 Z" fill="url(#area)"/>
      </g>
      <text x="215" y="1631" font-size="90" font-weight="900" fill="#30506a" fill-opacity=".035" textLength="361" lengthAdjust="spacing">东方财富</text>
      <polyline transform="translate(0 1380) scale(.333333)" points=${FLOW_LINE} fill="none" stroke="#4085d6" stroke-width="7.500"/>
      ${label(37, 1428.5, 105, 27.5, "#cd2f2c", "0.27亿元")}
      ${label(682.5, 1422, 73, 28, "#cd2f2c", "7.60%")}
      ${label(37, 1592, 45, 27.5, MUTE, "7.76")}
      ${label(37, 1780, 105, 27.5, GREEN, "0.27亿元")}
      ${label(672.5, 1780, 83, 28, GREEN, "-7.60%")}
      ${label(32, 1833, 70, 28, MUTE, "09:30")}
      ${label(693, 1833, 66, 28, MUTE, "15:00")}
    </svg>`;
  }
}

@customElement("order-donut")
class OrderDonut extends LitElement {
  static styles = [FONT, css`
    :host { width: 258px; }
    .ring { margin: 0 0 15px 10px; }
    .row { display: flex; align-items: center; height: 52px; font-size: 31px; }
    .sq { width: 11px; height: 11px; border-radius: 3px; margin-right: 12px; }
    .k { color: #666; }
    .v { margin-left: auto; font-weight: 500; letter-spacing: 0.1px; }
  `];
  render() {
    const c = 113, R = 111.6, r = 55.6;
    const at = (deg: number, q: number) => {
      const a = (deg * Math.PI) / 180;
      return `${(c + q * Math.sin(a)).toFixed(2)} ${(c - q * Math.cos(a)).toFixed(2)}`;
    };
    const parts: [number, number, string][] = [[0, 83.3, "#e04415"], [83.3, 157.4, "#ee9075"], [157.4, 261.8, "#3fae62"], [261.8, 360, "#8ccfa3"]];
    const rows = [["#e04415", "主动买", "1.53亿元", "r"], ["#ee9075", "被动买", "1.37亿元", "r"], ["#3fae62", "主动卖", "1.91亿元", "g"], ["#8ccfa3", "被动卖", "1.81亿元", "g"]];
    return html`
      <svg class="ring" width="226" height="226" viewBox="0 0 226 226">
        ${parts.map(([a, b, f]) => svg`<path d="M${at(a, R)} A${R} ${R} 0 0 1 ${at(b, R)} L${at(b, r)} A${r} ${r} 0 0 0 ${at(a, r)} Z" fill=${f} stroke="#fff" stroke-width="1.6"/>`)}
        <text x="114.500" y="103" font-size="29" fill="#666" text-anchor="middle">大单</text>
        <text x="114.500" y="143" font-size="29" fill="#666" text-anchor="middle">分布</text>
      </svg>
      ${rows.map(([col, k, v, cls]) => html`<div class="row"><i class="sq" style="background:${col}"></i><span class="k">${k}</span><span class="v ${cls}">${v}</span></div>`)}`;
  }
}

@customElement("app-root")
class AppRoot extends LitElement {
  static styles = [FONT, css`
    :host { width: 1080px; height: 2400px; overflow: hidden; background: #fff; color: #2b2c2e; }
    .page { display: flex; flex-direction: column; height: 2400px; }
    .quote { display: flex; height: 789px; border-bottom: 1px solid #e0e1e3; box-sizing: content-box; flex: none; }
    .tabs { display: flex; gap: 54px; height: 92px; padding-left: 7px; border-bottom: 1px solid #e0e1e3; flex: none; font-size: 41.5px; line-height: 95px; }
    .tab { display: flex; flex-direction: column; align-items: center; white-space: nowrap; height: 92px; }
    .tab.on { color: #e85d12; }
    .tab.fade { background: linear-gradient(90deg, #d8d8d8, #8a8a8a 50%, #2b2c2e 50%); -webkit-background-clip: text; color: transparent; }
    .line { width: 37px; height: 5px; border-radius: 3px; background: #ee5b12; flex: none; }
    .tab .line { margin-top: -8px; }
    .content { flex: 1; overflow: hidden; padding: 0 32px; }
    .card { display: grid; grid-template-columns: repeat(3, 1fr); height: 145px; margin-top: 38px; border-radius: 12px; background: #f6f7fa; text-align: center; box-sizing: border-box; padding-top: 17px; }
    .card .k { font-size: 33.5px; line-height: 58px; color: #666; }
    .card .v { font-size: 37px; line-height: 55px; font-weight: 500; letter-spacing: 0.3px; }
    .card .v u { font-size: 36px; text-decoration: none; margin-left: 3px; }
    .opts { display: flex; align-items: center; height: 118px; font-size: 31.8px; color: #c2551a; line-height: 40px; }
    .opts .check { margin-right: 12px; }
    .opts .filter { margin: 0 16px 0 54px; }
    .opts .txt { margin-top: -2px; }
    .charts { display: flex; justify-content: space-between; margin-top: 2px; height: 446px; }
    .total { display: flex; align-items: baseline; height: 102px; line-height: 104px; font-size: 36.8px; }
    .total .v { font-weight: 500; font-size: 39px; margin-left: 12px; }
    .total .amt { letter-spacing: -1.7px; }
    .total .v u { text-decoration: none; font-size: 36px; margin-left: 3px; letter-spacing: 0; }
    .total .gap { margin-left: 54px; }
    .track { height: 8px; border-radius: 4px; background: #f2f3f5; }
    .fill { height: 8px; border-radius: 4px; background: #fa5a05; }
    .filters { display: flex; gap: 54px; font-size: 41px; line-height: 60px; margin-top: 47px; height: 83px; }
    .filters div { display: flex; flex-direction: column; align-items: center; }
    .filters .on { color: #e85d12; }
    .filters .line { margin-top: 17px; }
    .cols { display: grid; grid-template-columns: 1fr 253px 254px 254px; }
    .th { height: 84px; align-items: center; font-size: 33.5px; color: #666; }
    .th span { display: flex; justify-content: flex-end; align-items: center; gap: 10px; }
    .th span:first-child { justify-content: flex-start; }
    .td { text-align: right; font-size: 45px; font-weight: 500; color: #159615; line-height: 92px; margin-top: 20px; white-space: nowrap; }
    .td .who { text-align: left; color: #2b2c2e; font-weight: 400; font-size: 41.500px; line-height: 48px; }
    .td small { display: block; font-size: 33px; line-height: 50px; color: #999; letter-spacing: -0.6px; }
    .td u { text-decoration: none; font-size: 43.500px; margin-left: 5px; letter-spacing: 0; }
    .td .vol { letter-spacing: 1.8px; }
    .td .amt { letter-spacing: -1.3px; }
    .td .avg { letter-spacing: -3px; padding-right: 2px; }
    .foot { flex: none; display: flex; align-items: flex-start; height: 138px; padding: 21px 32px 0; border-top: 1px solid #d4d7dc; background: #f6f8fb; box-sizing: border-box; }
    .btn { width: 371px; height: 95px; border-radius: 16px; color: #fff; text-align: center; font-size: 40px; line-height: 95px; flex: none; }
    .buy { background: linear-gradient(#f4524c, #ec726b); margin-right: 13px; }
    .sell { background: linear-gradient(#3d78f7, #6c98fd); }
    .act { display: flex; flex-direction: column; align-items: center; width: 64px; font-size: 31px; color: #666; line-height: 40px; margin-left: 64px; white-space: nowrap; }
    .act b { font-size: 49px; font-weight: 500; line-height: 50px; height: 60px; color: #2b2c2e; }
    .act svg { height: 60px; }
    .act.more { margin-left: 67px; }
  `];
  render() {
    const sort = html`<svg width="12" height="30" viewBox="0 0 12 30" fill="#d3d4d6"><path d="M6 1 L11.500 12 H.5 Z M6 29 L11.500 18 H.5 Z"/></svg>`;
    return html`<div class="page">
      <stock-header></stock-header>
      <div class="quote"><quote-chart></quote-chart><order-book></order-book></div>
      <div class="tabs">
        <div class="tab fade">买卖队列</div>
        <div class="tab">逐笔还原</div>
        <div class="tab">交易分布</div>
        <div class="tab">逐笔委托</div>
        <div class="tab on">大单明细<i class="line"></i></div>
      </div>
      <div class="content">
        <div class="card">
          <div><div class="k">大单买</div><div class="v r">2.90<u>亿元</u></div></div>
          <div><div class="k">大单卖</div><div class="v g">3.72<u>亿元</u></div></div>
          <div><div class="k">大单净额</div><div class="v g">8279<u>万元</u></div></div>
        </div>
        <div class="opts">
          <svg class="check" width="32" height="32" viewBox="0 0 32 32"><circle cx="16" cy="16" r="16" fill="#ee5b12"/><path d="M9 16.500 L14.500 21.500 L23.500 11.500" fill="none" stroke="#fff" stroke-width="2.600"/></svg>
          <span class="txt">显示成交金额</span>
          <span class="txt filter">主力成交筛选</span>
          <svg width="17" height="12" viewBox="0 0 17 12"><path d="M0 0 H17 L8.500 12 Z" fill="#ee5b12"/></svg>
        </div>
        <div class="charts"><flow-chart></flow-chart><order-donut></order-donut></div>
        <div class="total">总成交金额<span class="v r amt">12.9<u>亿元</u></span><span class="gap">大单占比</span><span class="v r">25.63%</span></div>
        <div class="track"><div class="fill" style="width:26.2%"></div></div>
        <div class="filters"><div class="on">全部<i class="line"></i></div><div>买单</div><div>卖单</div></div>
        <div class="cols th"><span>买卖行为</span><span>成交量${sort}</span><span>成交额${sort}</span><span>成交均价${sort}</span></div>
        <div class="cols td"><div class="who">主力主卖<small>14:48:27</small></div><div class="vol">800<u>手</u></div><div class="amt">61.4<u>万元</u></div><div class="avg">7.67</div></div>
      </div>
      <div class="foot">
        <div class="btn buy">买入</div><div class="btn sell">卖出</div>
        <div class="act"><b>撤</b>撤单</div>
        <div class="act more"><svg width="44" viewBox="0 0 44 60" fill="#2b2c2e"><circle cx="6" cy="24" r="4.300"/><circle cx="22" cy="24" r="4.300"/><circle cx="38" cy="24" r="4.300"/></svg>更多</div>
      </div>
    </div>`;
  }
}
